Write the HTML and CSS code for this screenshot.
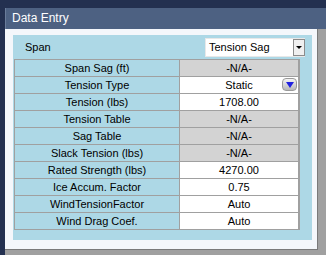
FILE: index.html
```html
<!DOCTYPE html>
<html lang="en">
<head>
  <meta charset="UTF-8">
  <title>Data Entry</title>
  <link rel="stylesheet" href="styles.css">
</head>
<body>
  <div class="window">
    <div class="titlebar">Data Entry</div>
    <div class="frame">
      <div class="client">
        <div class="panel">
          <div class="span-row">
            <span class="span-label">Span</span>
            <div class="combo">
              <span class="combo-text">Tension Sag</span>
              <span class="combo-btn"><span class="tri"></span></span>
            </div>
          </div>
          <div class="grid">
            <div class="row"><div class="lbl">Span Sag (ft)</div><div class="val na">-N/A-</div></div>
            <div class="row"><div class="lbl">Tension Type</div><div class="val">Static<span class="drop"><span class="tri blue"></span></span></div></div>
            <div class="row"><div class="lbl">Tension (lbs)</div><div class="val">1708.00</div></div>
            <div class="row"><div class="lbl">Tension Table</div><div class="val na">-N/A-</div></div>
            <div class="row"><div class="lbl">Sag Table</div><div class="val na">-N/A-</div></div>
            <div class="row"><div class="lbl">Slack Tension (lbs)</div><div class="val na">-N/A-</div></div>
            <div class="row"><div class="lbl">Rated Strength (lbs)</div><div class="val">4270.00</div></div>
            <div class="row"><div class="lbl">Ice Accum. Factor</div><div class="val">0.75</div></div>
            <div class="row"><div class="lbl">WindTensionFactor</div><div class="val">Auto</div></div>
            <div class="row"><div class="lbl">Wind Drag Coef.</div><div class="val">Auto</div></div>
          </div>
        </div>
      </div>
    </div>
  </div>
</body>
</html>
```

FILE: styles.css
```css
body {
  margin: 0;
  background: #233050;
  font-family: "Liberation Sans", Arial, sans-serif;
  font-size: 11px;
  color: #000;
  overflow: hidden;
}
.window {
  margin: 8px 0 0 5px;
  background: #a0a0a0;
  height: 247px;
}
.titlebar {
  height: 21px;
  line-height: 21px;
  background: #4d6182;
  color: white;
  font-size: 12px;
  padding-left: 6px;
  border-left: 1px solid #6a7c9a;
}
.frame {
  display: flex;
}
.client {
  width: 299px;
  height: 205px;
  background: #f4f7fb;
  padding: 6px 5px 9px 8px;
  border-right: 1px solid #7a7a7a;
  border-bottom: 1px solid #7a7a7a;
}
.panel {
  background: #add8e6;
  height: 205px;
}
.span-row {
  height: 24px;
  display: flex;
  align-items: center;
  justify-content: space-between;
  padding: 0 7px 0 12px;
}
.combo {
  width: 98px;
  height: 17px;
  background: white;
  border: 1px solid #e8e8e8;
  display: flex;
  align-items: center;
}
.combo-text {
  flex: 1;
  padding-left: 3px;
}
.combo-btn {
  width: 12px;
  height: 17px;
  border: 1px solid #8c8c8c;
  margin-right: -1px;
  box-sizing: border-box;
  display: flex;
  align-items: center;
  justify-content: center;
  background: #f0f0f0;
}
.tri {
  width: 0;
  height: 0;
  border-left: 3px solid transparent;
  border-right: 3px solid transparent;
  border-top: 3px solid #000;
}
.grid {
  margin-left: 1px;
  width: 286px;
  border-top: 1px solid #a0a0a0;
}
.row {
  display: flex;
  height: 17px;
  border-bottom: 1px solid #a0a0a0;
  box-sizing: border-box;
}
.lbl {
  width: 164px;
  border-left: 1px solid #a0a0a0;
  text-align: center;
  line-height: 16px;
}
.val {
  flex: 1;
  background: white;
  border-left: 1px solid #a0a0a0;
  border-right: 2px solid #a0a0a0;
  text-align: center;
  line-height: 16px;
  position: relative;
}
.val.na {
  background: #d3d3d3;
}
.drop {
  position: absolute;
  right: 1px;
  top: 1px;
  width: 15px;
  height: 13px;
  border-radius: 4px;
  background: linear-gradient(#f4f4f4, #b8b8b8);
  border: 1px solid #9a9a9a;
  box-sizing: border-box;
  display: flex;
  align-items: center;
  justify-content: center;
}
.tri.blue {
  border-left-width: 4px;
  border-right-width: 4px;
  border-top: 6px solid #2020e0;
}
```
